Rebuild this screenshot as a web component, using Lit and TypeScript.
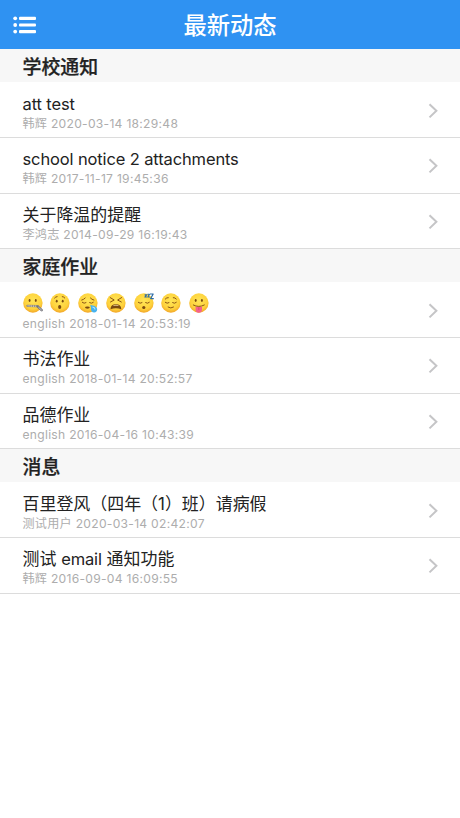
import { LitElement, html, css, svg } from "lit";
import { customElement, property } from "lit/decorators.js";

type Face = "zipper" | "hushed" | "sleepy" | "tired" | "sleeping" | "relieved" | "tongue";

interface Item {
  title?: string;
  faces?: Face[];
  meta: string;
}

interface Section {
  name: string;
  items: Item[];
}

const SECTIONS: Section[] = [
  {
    name: "学校通知",
    items: [
      { title: "att test", meta: "韩辉 2020-03-14 18:29:48" },
      { title: "school notice 2 attachments", meta: "韩辉 2017-11-17 19:45:36" },
      { title: "关于降温的提醒", meta: "李鸿志 2014-09-29 16:19:43" },
    ],
  },
  {
    name: "家庭作业",
    items: [
      {
        faces: ["zipper", "hushed", "sleepy", "tired", "sleeping", "relieved", "tongue"],
        meta: "english 2018-01-14 20:53:19",
      },
      { title: "书法作业", meta: "english 2018-01-14 20:52:57" },
      { title: "品德作业", meta: "english 2016-04-16 10:43:39" },
    ],
  },
  {
    name: "消息",
    items: [
      { title: "百里登风（四年（1）班）请病假", meta: "测试用户 2020-03-14 02:42:07" },
      { title: "测试 email 通知功能", meta: "韩辉 2016-09-04 16:09:55" },
    ],
  },
];

const closedEyes = svg`
  <path class="line" d="M4.3 9.4Q6.1 11.1 8 9.7M11.6 9.7Q13.5 11.1 15.3 9.4"/>`;

const FACES = {
  zipper: svg`
    <ellipse class="ink" cx="6.6" cy="7.5" rx=".95" ry="1.4"/>
    <ellipse class="ink" cx="12.8" cy="7.5" rx=".95" ry="1.4"/>
    <path d="M4.4 12.9L14.6 13.2" stroke="#8d8676" stroke-width="2.2" stroke-linecap="round"/>
    <path d="M4.6 12.9L15 13.2" stroke="#dcd9cf" stroke-width="1.3" stroke-dasharray="1 .8"/>
    <path d="M14.6 13.4L18.7 17.2" stroke="#74747a" stroke-width="2.4" stroke-linecap="round"/>
    <path d="M15.7 14.4L18.6 17.1" stroke="#c6c7cb" stroke-width="1" stroke-linecap="round"/>`,
  hushed: svg`
    <path class="line" d="M4.6 5Q5.6 3.7 7.1 3.6M12.3 3.6Q13.9 3.7 14.8 5"/>
    <ellipse class="ink" cx="6.7" cy="8.2" rx=".95" ry="1.4"/>
    <ellipse class="ink" cx="12.7" cy="8.2" rx=".95" ry="1.4"/>
    <ellipse class="ink" cx="9.7" cy="14" rx="1.6" ry="2"/>`,
  sleepy: svg`
    <path class="line" d="M3.7 7.1Q5.8 6.6 7.2 5M12.4 5Q13.8 6.6 15.9 7.1"/>
    ${closedEyes}
    <ellipse class="ink" cx="9.4" cy="14.6" rx="2.4" ry="1.1"/>
    <path d="M11.9 12.2C14.8 11.9 19.2 13.4 19.2 16.3A3.1 3.1 0 0 1 13 16.3C13 14.3 13 13.4 11.9 12.2Z" fill="#46b2ee"/>
    <path d="M14.5 14Q17 14.6 17.1 16.5" fill="none" stroke="#b1e7ff" stroke-width="1.1"/>`,
  tired: svg`
    <path class="line" d="M4.2 4.6L8.2 7L4.5 9M15.6 4.6L11.6 7L15.3 9"/>
    <path class="ink" d="M4.5 16.2Q4.6 11.2 9.9 11.2Q15.2 11.2 15.3 16.2Q9.9 14.1 4.5 16.2Z"/>
    <path d="M7 12.4Q9.9 11.3 12.8 12.4L12.4 13Q9.9 12.4 7.4 13Z" fill="#e2c48f"/>`,
  sleeping: svg`
    ${closedEyes}
    <ellipse class="ink" cx="9.8" cy="14.4" rx="1.6" ry="1.5"/>
    <path d="M10.6 1.8H12.6L10.9 4H12.9M13.4 1.2H15.5L13.8 4H15.9M16 1H19.2L16.6 5.6H19.8" fill="none" stroke="#2c6ba6" stroke-width="1.15" stroke-linejoin="round"/>`,
  relieved: svg`
    <path class="line" d="M4.3 6Q5.6 4.4 7.3 4.6M12.3 4.6Q14 4.4 15.3 6"/>
    ${closedEyes}
    <path class="line" d="M7.1 14.1Q9.8 16 12.5 14.1"/>`,
  tongue: svg`
    <ellipse class="ink" cx="6.7" cy="7.5" rx=".95" ry="1.4"/>
    <ellipse class="ink" cx="12.9" cy="7.5" rx=".95" ry="1.4"/>
    <path class="line" d="M4.3 12Q9.8 15 15.3 12"/>
    <path d="M6.6 13.6Q9.8 14.6 13 13.6V16.6A3.2 3.2 0 0 1 6.6 16.6Z" fill="#f5628c"/>
    <path d="M9.8 14.4V17" stroke="#d93f70" stroke-width=".8"/>`,
};

@customElement("emoji-face")
class EmojiFace extends LitElement {
  @property() face: Face = "hushed";

  static styles = css`
    :host { display: block; width: 20px; height: 20px; }
    svg { display: block; overflow: visible; }
    .ink { fill: #7a4a10; }
    .line { fill: none; stroke: #8a5515; stroke-width: 1; stroke-linecap: round; stroke-linejoin: round; }
  `;

  render() {
    return html`<svg width="20" height="20" viewBox="0 0 20 20">
      <defs>
        <radialGradient id="skin" cx=".5" cy=".38" r=".62">
          <stop offset="0" stop-color="#ffe556" />
          <stop offset=".7" stop-color="#fed23c" />
          <stop offset="1" stop-color="#f2a628" />
        </radialGradient>
      </defs>
      <circle cx="9.9" cy="10" r="9.7" fill="url(#skin)" />
      ${FACES[this.face]}
    </svg>`;
  }
}

@customElement("app-root")
class AppRoot extends LitElement {
  static styles = css`
    :host {
      display: block;
      min-height: 818px;
      background: #fff;
      color: #222;
      font-family: Inter, "Noto Sans CJK SC", sans-serif;
    }
    .bar {
      display: grid;
      grid-template-columns: 60px 1fr 60px;
      align-items: center;
      height: 49px;
      background: #2f92f2;
      color: #fff;
    }
    .menu { display: block; margin: 1px 0 0 13px; }
    .bar h1 {
      margin: 0;
      padding-top: 2px;
      font-size: 23.3px;
      line-height: 34px;
      font-weight: 500;
      text-align: center;
    }
    .section {
      display: flex;
      align-items: center;
      box-sizing: border-box;
      height: 33px;
      margin: 0;
      padding: 4px 22.5px 0;
      background: #f7f7f7;
      font-size: 18.9px;
      line-height: 28px;
      font-weight: 500;
      -webkit-text-stroke: 0.25px #222;
    }
    .row {
      display: flex;
      align-items: center;
      justify-content: space-between;
      box-sizing: border-box;
      height: 56px;
      padding: 0 22px 0 22.5px;
      border-bottom: 1px solid #dcdcdc;
    }
    .row.last { height: 55px; }
    .text { padding-top: 5px; }
    .row.middle .text { padding-top: 3px; }
    .title {
      display: flex;
      align-items: center;
      height: 22px;
      font-size: 16.95px;
      line-height: 22px;
      white-space: pre;
    }
    .latin { font-size: 16.5px; letter-spacing: -0.13px; }
    .faces { gap: 7.8px; padding-bottom: 1px; height: 21px; }
    .meta {
      height: 17px;
      font-size: 12.1px;
      line-height: 17px;
      letter-spacing: 0.28px;
      color: #adadad;
      white-space: pre;
    }
    .chevron { display: block; margin-top: 2px; }
    .row.middle .chevron { margin-top: 1px; }
  `;

  renderTitle(title: string) {
    return title
      .split(/([a-z][a-z0-9 ]*[a-z])/)
      .map((part, i) => (i % 2 ? html`<span class="latin">${part}</span>` : part));
  }

  renderItem(item: Item, index: number) {
    return html`<div class="row ${["", "middle", "last"][index]}">
      <div class="text">
        ${item.faces
          ? html`<div class="title faces">${item.faces.map((f) => html`<emoji-face .face=${f}></emoji-face>`)}</div>`
          : html`<div class="title"><span>${this.renderTitle(item.title ?? "")}</span></div>`}
        <div class="meta">${item.meta}</div>
      </div>
      <svg class="chevron" width="10" height="16" viewBox="0 0 10 16">
        <path d="M1.5 1.2L8.4 7.8L1.5 14.4" fill="none" stroke="#c5c5c7" stroke-width="2" />
      </svg>
    </div>`;
  }

  render() {
    return html`
      <header class="bar">
        <svg class="menu" width="23" height="18" viewBox="0 0 23 18">
          <g fill="#fff">
            <circle cx="2.2" cy="2.3" r="1.9" /><circle cx="2.2" cy="9" r="1.9" /><circle cx="2.2" cy="15.6" r="1.9" />
            <rect x="6" y=".7" width="17" height="3.2" rx="1" />
            <rect x="6" y="7.4" width="17" height="3.2" rx="1" />
            <rect x="6" y="14" width="17" height="3.2" rx="1" />
          </g>
        </svg>
        <h1>最新动态</h1>
      </header>
      <main>
        ${SECTIONS.map(
          (s) => html`<h2 class="section">${s.name}</h2>
            ${s.items.map((item, i) => this.renderItem(item, i))}`,
        )}
      </main>
    `;
  }
}
